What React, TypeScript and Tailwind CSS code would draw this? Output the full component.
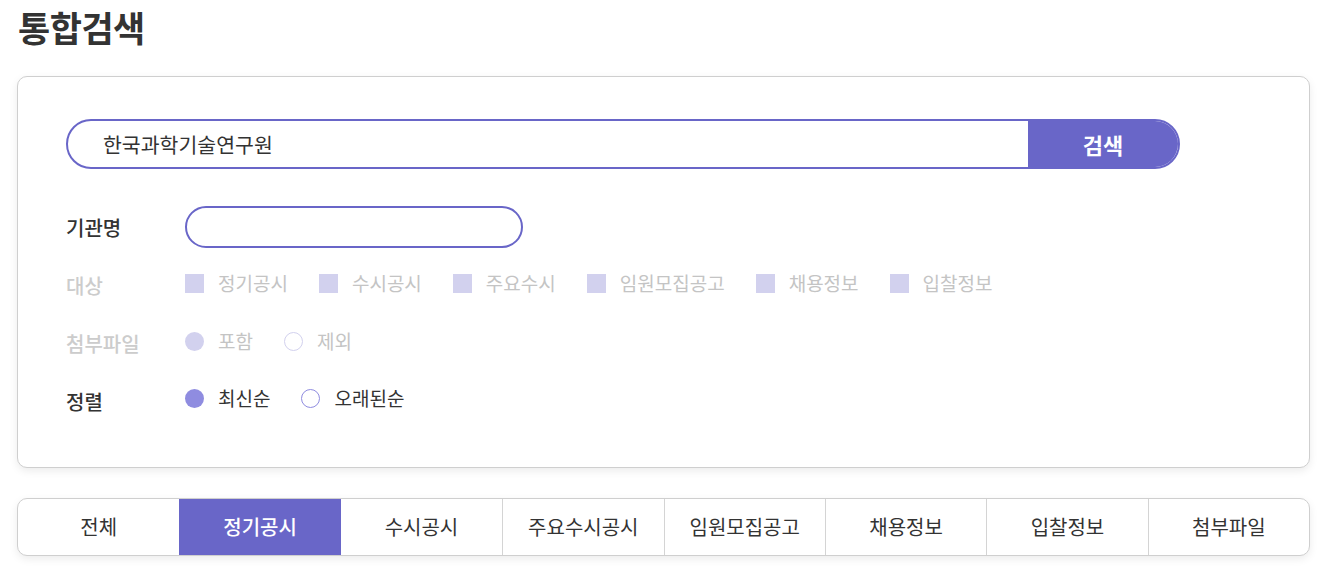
import React from "react";

const font = { fontFamily: '"Noto Sans CJK KR", "Noto Sans", sans-serif' };

const targets = ["정기공시", "수시공시", "주요수시", "임원모집공고", "채용정보", "입찰정보"];
const tabs = ["전체", "정기공시", "수시공시", "주요수시공시", "임원모집공고", "채용정보", "입찰정보", "첨부파일"];

export default function App() {
  return (
    <div className="w-[1320px] h-[570px] bg-white overflow-hidden" style={font}>
      <div className="pl-[17px] pr-[10px] pt-[4px]">
        <h1 className="text-[35px] leading-[46px] font-bold text-[#333] pl-[1px] tracking-[-0.5px]">통합검색</h1>

        <div className="mt-[26px] border border-[#cfcfcf] rounded-[10px] bg-white shadow-[0_3px_8px_rgba(0,0,0,0.08)] pl-[48px] pt-[42px] pb-[49px]">
          {/* search bar */}
          <div className="w-[1114px] h-[50px] rounded-full border-2 border-[#6966c8] flex items-stretch overflow-hidden">
            <div className="flex-1 flex items-center pl-[35px] text-[20.5px] text-[#333]">한국과학기술연구원</div>
            <div className="w-[150px] bg-[#6966c8] flex items-center justify-center text-white text-[22px] font-bold">검색</div>
          </div>

          {/* 기관명 */}
          <div className="flex items-center mt-[37px] h-[42px]">
            <div className="w-[119px] text-[20px] font-medium text-[#333] pt-[2px]">기관명</div>
            <div className="w-[338px] h-[42px] rounded-full border-2 border-[#6966c8]" />
          </div>

          {/* 대상 */}
          <div className="flex items-center mt-[15px] h-[40px]">
            <div className="w-[119px] text-[20px] font-medium text-[#cccccc] pt-[6px]">대상</div>
            <div className="flex items-center gap-[31px]">
              {targets.map((t) => (
                <div key={t} className="flex items-center gap-[14px]">
                  <div className="w-[19px] h-[19px] bg-[#d2d1ee]" />
                  <span className="text-[19px] text-[#c4c4c4]">{t}</span>
                </div>
              ))}
            </div>
          </div>

          {/* 첨부파일 */}
          <div className="flex items-center mt-[18px] h-[40px]">
            <div className="w-[119px] text-[20px] font-medium text-[#cccccc] pt-[6px]">첨부파일</div>
            <div className="flex items-center gap-[31px]">
              <div className="flex items-center gap-[14px]">
                <div className="w-[19px] h-[19px] rounded-full bg-[#d2d1ee]" />
                <span className="text-[19px] text-[#c4c4c4]">포함</span>
              </div>
              <div className="flex items-center gap-[14px]">
                <div className="w-[19px] h-[19px] rounded-full border border-[#d2d1ee] bg-white" />
                <span className="text-[19px] text-[#c4c4c4]">제외</span>
              </div>
            </div>
          </div>

          {/* 정렬 */}
          <div className="flex items-center mt-[17px] h-[40px]">
            <div className="w-[119px] text-[20px] font-medium text-[#333] pt-[7px]">정렬</div>
            <div className="flex items-center gap-[31px] pt-[1px]">
              <div className="flex items-center gap-[14px]">
                <div className="w-[19px] h-[19px] rounded-full bg-[#8f8ce0]" />
                <span className="text-[19px] text-[#333]">최신순</span>
              </div>
              <div className="flex items-center gap-[14px]">
                <div className="w-[19px] h-[19px] rounded-full border border-[#8f8ce0] bg-white" />
                <span className="text-[19px] text-[#333]">오래된순</span>
              </div>
            </div>
          </div>
        </div>

        {/* tabs */}
        <div className="mt-[30px] h-[58px] border border-[#cfcfcf] rounded-[10px] bg-white shadow-[0_3px_8px_rgba(0,0,0,0.08)] grid grid-cols-8 overflow-hidden">
          {tabs.map((t, i) => (
            <div
              key={t}
              className={
                i === 1
                  ? "flex items-center justify-center bg-[#6966c8] text-white text-[20px] font-medium"
                  : i === 0 || i === 2
                  ? "flex items-center justify-center text-[20px] text-[#333]"
                  : "flex items-center justify-center text-[20px] text-[#333] border-l border-[#d4d4d4]"
              }
            >
              {t}
            </div>
          ))}
        </div>
      </div>
    </div>
  );
}
